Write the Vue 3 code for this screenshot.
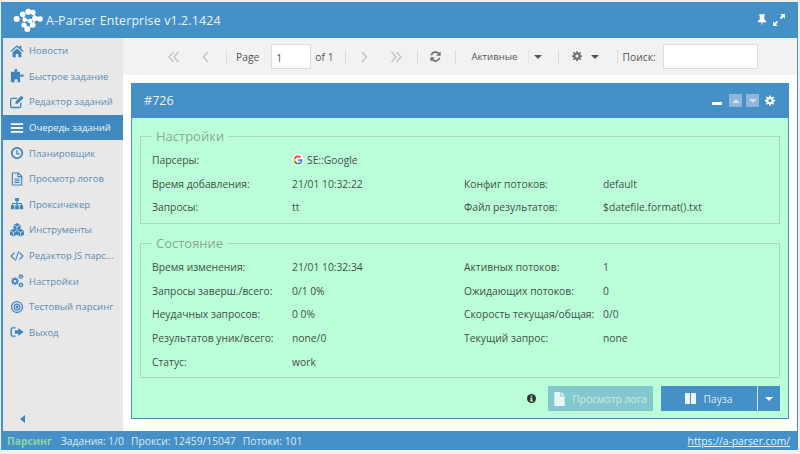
<script setup>
const menu = [
  { label: 'Новости', icon: 'home' },
  { label: 'Быстрое задание', icon: 'puzzle' },
  { label: 'Редактор заданий', icon: 'edit' },
  { label: 'Очередь заданий', icon: 'bars', active: true },
  { label: 'Планировщик', icon: 'clock' },
  { label: 'Просмотр логов', icon: 'file' },
  { label: 'Проксичекер', icon: 'sitemap' },
  { label: 'Инструменты', icon: 'cubes' },
  { label: 'Редактор JS парс...', icon: 'code' },
  { label: 'Настройки', icon: 'cogs' },
  { label: 'Тестовый парсинг', icon: 'target' },
  { label: 'Выход', icon: 'exit' }
]

const gearPath = 'M10.9 1h-1.8l-.4 2.2c-.5.1-1 .3-1.4.6L5.4 2.5 4.1 3.8l1.3 1.9c-.3.4-.5.9-.6 1.4L2.6 7.5v1.8l2.2.4c.1.5.3 1 .6 1.4l-1.3 1.9 1.3 1.3 1.9-1.3c.4.3.9.5 1.4.6l.4 2.2h1.8l.4-2.2c.5-.1 1-.3 1.4-.6l1.9 1.3 1.3-1.3-1.3-1.9c.3-.4.5-.9.6-1.4l2.2-.4V7.5l-2.2-.4c-.1-.5-.3-1-.6-1.4l1.3-1.9-1.3-1.3-1.9 1.3c-.4-.3-.9-.5-1.4-.6zM10 6a2.4 2.4 0 1 1 0 4.8A2.4 2.4 0 0 1 10 6z'
</script>

<template>
  <div class="page">
    <div class="window">
      <header class="titlebar">
        <svg class="logo" viewBox="0 0 36 30" width="36" height="30" fill="#fff">
          <circle cx="6.700" cy="14" r="3" />
          <circle cx="12.700" cy="9.300" r="2.800" />
          <circle cx="18.300" cy="6.700" r="3" />
          <circle cx="23" cy="7.300" r="2.600" />
          <circle cx="14.700" cy="14.700" r="2.300" />
          <circle cx="20" cy="16" r="2.300" />
          <circle cx="25" cy="13.300" r="2.800" />
          <circle cx="30" cy="14" r="2.800" />
          <circle cx="22.700" cy="20" r="2.800" />
          <circle cx="14" cy="20" r="2.600" />
          <circle cx="17.300" cy="24" r="3" />
          <path d="M12.700 9.300l2 5.400 5.300 1.300 5-2.700 5 .7M23 7.300L25 13.300 22.700 20l-5.400 4L14 20" stroke="#fff" stroke-width="1.500" fill="none" />
        </svg>
        <span class="app-title">A-Parser Enterprise v1.2.1424</span>
        <span class="title-icons">
          <svg viewBox="0 0 12 14" width="10" height="12" fill="#fff"><path d="M2.500 0h7v1.300L8.700 2v4.200L11 8.500v1.300H6.800L6 14l-.8-4.200H1V8.500l2.300-2.300V2l-.8-.7z" /></svg>
          <svg viewBox="0 0 14 14" width="12" height="12" fill="#fff"><path d="M8.500 0H14v5.500l-2-2L9.500 6 8 4.500 10.500 2zM5.500 14H0V8.500l2 2L4.500 8 6 9.500 3.500 12z" /></svg>
        </span>
      </header>

      <div class="middle">
        <aside class="sidebar">
          <nav class="menu">
            <a v-for="item in menu" :key="item.label" class="menu-item" :class="{ active: item.active }">
              <span class="menu-icon">
                <svg viewBox="0 0 16 16" width="14" height="14" fill="currentColor">
                  <path v-if="item.icon === 'home'" d="M8 1.500L.5 8l1 1.100L8 3.500l6.500 5.600 1-1.100-2.500-2.200V2h-2v2.100zM3 9.500V15h3.500v-3.500h3V15H13V9.500L8 5.200z" />
                  <path v-else-if="item.icon === 'puzzle'" d="M5 1.500a1.800 1.800 0 0 1 3.500 0c0 .8-.6 1.100-.6 1.700h3.600v3.600c.6 0 .9-.6 1.700-.6h2.300v2.600h-2.300c-.8 0-1.100-.6-1.700-.6V15H8.300c0-.6.6-.9.6-1.700a1.900 1.900 0 0 0-3.800 0c0 .8.6 1.100.6 1.700H1V3.200h4.600C5.600 2.600 5 2.300 5 1.500z" />
                  <g v-else-if="item.icon === 'edit'">
                    <path d="M2.500 3H9L7.500 4.500h-5a1 1 0 0 0-1 1v7a1 1 0 0 0 1 1h8a1 1 0 0 0 1-1V9.500L13 8v4.500a2.500 2.500 0 0 1-2.500 2.500h-8A2.500 2.500 0 0 1 0 12.500v-7A2.500 2.500 0 0 1 2.500 3z" />
                    <path d="M13 .800l2.500 2.500-6.700 6.700H6.300V7.500z" />
                  </g>
                  <path v-else-if="item.icon === 'bars'" d="M1 2.500h14v2.200H1zM1 6.900h14v2.200H1zM1 11.300h14v2.200H1z" />
                  <path v-else-if="item.icon === 'clock'" fill-rule="evenodd" d="M8 1a7 7 0 1 1 0 14A7 7 0 0 1 8 1zm0 2a5 5 0 1 0 0 10A5 5 0 0 0 8 3zM7.200 4.500h1.400v3.700h2.600v1.400h-4z" />
                  <path v-else-if="item.icon === 'file'" fill-rule="evenodd" d="M2 .500h8l4 4V15.500H2zM3.300 1.800v12.400h9.400V6H8.500V1.800zM9.800 2.200v2.500h2.500zM5 7.500h6v1H5zM5 9.500h6v1H5zM5 11.500h6v1H5z" />
                  <path v-else-if="item.icon === 'sitemap'" d="M5.800 1h4.400v3.500H8.700v2.300h5v2.700H15V14h-4V9.500h1.500V8H8.700v1.500H10V14H6V9.500h1.300V8h-3.800v1.500H5V14H1V9.500h1.300V6.800h5V4.500H5.800z" />
                  <g v-else-if="item.icon === 'cubes'" class="cubes">
                    <path d="M8 0l4 2.200v4.400L8 8.800 4 6.600V2.200z" />
                    <path d="M4 6.700l4 2.200v4.400l-4 2.200-4-2.200V8.900z" />
                    <path d="M12 6.700l4 2.200v4.400l-4 2.200-4-2.200V8.900z" />
                    <path class="cube-line" d="M4.500 2.400L8 4.300l3.500-1.900M8 4.300v4M.5 9.100L4 11l3.500-1.900M4 11v4M8.500 9.100L12 11l3.500-1.900M12 11v4" />
                  </g>
                  <path v-else-if="item.icon === 'code'" d="M4.700 3.500l.9 1-3.300 3.500 3.300 3.500-.9 1L.3 8zM11.300 3.500l4.400 4.500-4.400 4.500-.9-1L13.700 8l-3.300-3.500zM9.300 2.500l1.100.3-3.700 10.700-1.100-.3z" />
                  <g v-else-if="item.icon === 'cogs'">
                    <path transform="translate(-.5 3) scale(.62)" fill-rule="evenodd" :d="gearPath" />
                    <path transform="translate(8.500 -.5) scale(.4)" fill-rule="evenodd" :d="gearPath" />
                    <path transform="translate(8.500 9) scale(.4)" fill-rule="evenodd" :d="gearPath" />
                  </g>
                  <path v-else-if="item.icon === 'target'" fill-rule="evenodd" d="M8 1a7 7 0 1 1 0 14A7 7 0 0 1 8 1zm0 1.500a5.500 5.500 0 1 0 0 11 5.500 5.500 0 0 0 0-11zM8 4a4 4 0 1 1 0 8 4 4 0 0 1 0-8zm0 1.300a2.700 2.700 0 1 0 0 5.400 2.700 2.700 0 0 0 0-5.400zM8 6.300a1.700 1.700 0 1 1 0 3.400 1.700 1.700 0 0 1 0-3.400z" />
                  <path v-else-if="item.icon === 'exit'" d="M3 2.500h3.500V4H3.200a1 1 0 0 0-1 1v6a1 1 0 0 0 1 1h3.300v1.500H3A2.700 2.700 0 0 1 .500 11V5A2.700 2.700 0 0 1 3 2.500zM9.500 3.300L15.500 8l-6 4.700V10H5.500V6h4z" />
                </svg>
              </span>
              <span class="menu-label">{{ item.label }}</span>
            </a>
          </nav>
          <div class="collapse"></div>
        </aside>

        <main class="content">
          <div class="toolbar">
            <span class="tb-btn">
              <svg viewBox="0 0 12 12" width="12" height="12" class="chev"><path d="M5.500 1L1 6l4.500 5M10.500 1L6 6l4.500 5" /></svg>
            </span>
            <span class="tb-btn prev">
              <svg viewBox="0 0 12 12" width="12" height="12" class="chev"><path d="M8 1L3.500 6 8 11" /></svg>
            </span>
            <span class="sep"></span>
            <span class="tb-text page-word">Page</span>
            <span class="page-input">1</span>
            <span class="tb-text of-word">of 1</span>
            <span class="sep"></span>
            <span class="tb-btn next">
              <svg viewBox="0 0 12 12" width="12" height="12" class="chev"><path d="M4 1l4.500 5L4 11" /></svg>
            </span>
            <span class="tb-btn last">
              <svg viewBox="0 0 12 12" width="12" height="12" class="chev"><path d="M1.500 1L6 6l-4.500 5M6.500 1L11 6l-4.500 5" /></svg>
            </span>
            <span class="sep"></span>
            <span class="tb-btn refresh">
              <svg viewBox="0 0 16 16" width="13" height="13" fill="#6e6e6e"><path d="M8 1.500c1.800 0 3.400.7 4.500 1.900L14.300 1.700V7H9l2-2A4.300 4.300 0 0 0 3.900 6.500H1.800A6.400 6.400 0 0 1 8 1.500zM1.700 9H7l-2 2a4.300 4.300 0 0 0 7.100-1.500h2.100A6.400 6.400 0 0 1 3.500 12.600l-1.800 1.700z" /></svg>
            </span>
            <span class="sep"></span>
            <span class="tb-text small active-filter">Активные</span>
            <span class="sep faint"></span>
            <span class="caret-dark"></span>
            <span class="sep after-caret"></span>
            <svg class="gear" viewBox="0 0 20 18" width="14" height="13" fill="#6e6e6e"><path fill-rule="evenodd" :d="gearPath" /></svg>
            <span class="caret-dark gear-caret"></span>
            <span class="sep after-gear"></span>
            <span class="tb-text search-word">Поиск:</span>
            <span class="search-input"></span>
          </div>

          <section class="card">
            <div class="card-head">
              <span class="card-title">#726</span>
              <span class="card-tools">
                <span class="tool-min"></span>
                <span class="tool-box"><i class="tri up"></i></span>
                <span class="tool-box"><i class="tri down"></i></span>
                <svg viewBox="0 0 20 18" width="14" height="14" fill="#fff"><path fill-rule="evenodd" :d="gearPath" /></svg>
              </span>
            </div>
            <div class="card-body">
              <fieldset class="group first-group">
                <legend>Настройки</legend>
                <div class="rows">
                  <span>Парсеры:</span>
                  <span class="parser">
                    <svg viewBox="0 0 24 24" width="12" height="12">
                      <circle cx="12" cy="12" r="12" fill="#fff" />
                      <path fill="#4285F4" d="M21 12.200c0-.7-.1-1.300-.2-1.900H12v3.600h5a4.300 4.300 0 0 1-1.900 2.800v2.300h3C20 17.300 21 15 21 12.200z" />
                      <path fill="#34A853" d="M12 21c2.500 0 4.600-.8 6.100-2.200l-3-2.300c-.8.600-1.900.9-3.100.9-2.400 0-4.400-1.600-5.100-3.800H3.800v2.400A9 9 0 0 0 12 21z" />
                      <path fill="#FBBC05" d="M6.900 13.600a5.400 5.400 0 0 1 0-3.400V7.800H3.800a9 9 0 0 0 0 8.200z" />
                      <path fill="#EA4335" d="M12 6.600c1.300 0 2.500.5 3.500 1.400l2.600-2.600A9 9 0 0 0 3.800 7.800l3.100 2.400C7.600 8.100 9.600 6.600 12 6.600z" />
                    </svg>
                    SE::Google
                  </span>
                  <span></span><span></span>
                  <span>Время добавления:</span><span>21/01 10:32:22</span>
                  <span>Конфиг потоков:</span><span>default</span>
                  <span>Запросы:</span><span>tt</span>
                  <span>Файл результатов:</span><span>$datefile.format().txt</span>
                </div>
              </fieldset>

              <fieldset class="group second-group">
                <legend>Состояние</legend>
                <div class="rows">
                  <span>Время изменения:</span><span>21/01 10:32:34</span>
                  <span>Активных потоков:</span><span>1</span>
                  <span>Запросы заверш./всего:</span><span>0/1 0%</span>
                  <span>Ожидающих потоков:</span><span>0</span>
                  <span>Неудачных запросов:</span><span>0 0%</span>
                  <span>Скорость текущая/общая:</span><span>0/0</span>
                  <span>Результатов уник/всего:</span><span>none/0</span>
                  <span>Текущий запрос:</span><span>none</span>
                  <span>Статус:</span><span>work</span>
                </div>
              </fieldset>

              <div class="actions">
                <svg class="info" viewBox="0 0 16 16" width="9" height="9"><circle cx="8" cy="8" r="8" fill="#333" /><path fill="#baffd9" d="M6.500 2.500h3v2.500h-3zM5.500 6.500h4v5h1.200v2H5.500v-2h1v-3h-1z" /></svg>
                <button class="btn-log">
                  <svg viewBox="0 0 12 16" width="11" height="14" fill="#e8f6f5"><path d="M0 0h7v5h5v11H0zM8 0l4 4H8z" /></svg>
                  Просмотр лога
                </button>
                <div class="pause-group">
                  <button class="btn-pause">
                    <span class="pause-icon"><i></i><i></i></span>
                    Пауза
                  </button>
                  <button class="btn-drop"><i class="tri down"></i></button>
                </div>
              </div>
            </div>
          </section>
        </main>
      </div>

      <footer class="statusbar">
        <span class="st-state">Парсинг</span>
        <span>Задания: 1/0</span>
        <span>Прокси: 12459/15047</span>
        <span>Потоки: 101</span>
        <a class="st-link">https://a-parser.com/</a>
      </footer>
    </div>
  </div>
</template>

<style>
html, body { margin: 0; background: #fff; }
</style>

<style scoped>
.page {
  width: 800px;
  height: 454px;
  padding: 2px 2px 4px 1px;
  box-sizing: border-box;
  background: #eef1f3;
  font-family: "Open Sans", "Noto Sans", sans-serif;
  font-size: 10.3px;
  color: #444;
  overflow: hidden;
}
.window {
  height: 100%;
  box-sizing: border-box;
  display: flex;
  flex-direction: column;
  background: #fff;
  border-left: 2px solid #4590c6;
  border-right: 1px solid #4590c6;
}
.titlebar {
  height: 36px;
  flex: none;
  background: #4590c6;
  display: flex;
  align-items: center;
  padding: 0 12px 0 7px;
  color: #fff;
}
.app-title { font-size: 12.4px; letter-spacing: .15px; color: #eef5fa; }
.title-icons { margin-left: auto; display: flex; gap: 6px; align-items: center; }

.middle { flex: 1; display: flex; min-height: 0; }
.sidebar {
  width: 120px;
  flex: none;
  background: #e8e8e8;
  display: flex;
  flex-direction: column;
}
.menu { display: flex; flex-direction: column; }
.menu-item {
  height: 25.6px;
  display: flex;
  align-items: center;
  padding-left: 7px;
  color: #5a8db5;
  white-space: nowrap;
  font-size: 9.5px;
}
.menu-item.active { background: #3f89c0; color: #f1f7fb; }
.menu-icon { width: 14px; margin-right: 5px; display: flex; color: #3f85bb; }
.active .menu-icon { color: #fff; }
.cube-line { fill: none; stroke: #e8e8e8; stroke-width: .8; }
.collapse {
  margin: auto 0 8px 17px;
  width: 0;
  height: 0;
  border-top: 4px solid transparent;
  border-bottom: 4px solid transparent;
  border-right: 5px solid #3f85bb;
}

.content { flex: 1; min-width: 0; display: flex; flex-direction: column; }
.toolbar {
  height: 37px;
  flex: none;
  background: #f2f2f2;
  display: flex;
  align-items: center;
  padding-left: 39px;
  box-sizing: border-box;
  color: #555;
}
.tb-btn { display: flex; justify-content: center; align-items: center; width: 24px; flex: none; }
.chev { fill: none; stroke: #c2c2c2; stroke-width: 1.300; }
.prev { margin: 0 3px 0 8px; }
.next { margin-left: 1px; }
.last { margin: 0 4px 0 8px; }
.refresh { margin: 0 2px 0 1px; }
.sep { width: 1px; height: 14px; background: #dcdcdc; margin: 0 5px; flex: none; }
.sep.faint { background: #e8e8e8; }
.tb-text { white-space: nowrap; }
.page-word { margin: 0 12px 0 4px; }
.page-input {
  width: 40px;
  height: 25px;
  flex: none;
  box-sizing: border-box;
  border: 1px solid #ddd;
  background: #fff;
  padding: 6px 0 0 4px;
  margin-right: 4px;
}
.of-word { margin-right: 6px; }
.small { font-size: 9.6px; }
.active-filter { margin: 0 5px 0 11px; }
.caret-dark {
  width: 0;
  height: 0;
  flex: none;
  border-left: 4px solid transparent;
  border-right: 4px solid transparent;
  border-top: 4px solid #555;
}
.after-caret { margin-left: 16px; }
.gear { margin-left: 6px; flex: none; }
.gear-caret { margin-left: 7px; }
.after-gear { margin-left: 18px; }
.search-word { margin-right: 7px; }
.search-input {
  width: 95px;
  height: 25px;
  flex: none;
  box-sizing: border-box;
  border: 1px solid #ddd;
  background: #fff;
}

.card {
  margin: 8px 8px 0 8px;
  height: 336px;
  display: flex;
  flex-direction: column;
  box-sizing: border-box;
  border: 1px solid #4590c6;
  border-top: 0;
  background: #baffd9;
}
.card-head {
  height: 35px;
  flex: none;
  margin: 0 -1px;
  background: #4590c6;
  color: #fff;
  display: flex;
  align-items: center;
  justify-content: space-between;
  padding: 0 12px 0 13px;
}
.card-title { font-size: 12.6px; color: #eaf3f9; }
.card-tools { display: flex; align-items: center; gap: 4px; }
.tool-min { width: 10px; height: 3px; background: #fff; margin: 5px 3px 0 0; }
.tool-box {
  width: 13px;
  height: 13px;
  background: #8fb6d6;
  display: flex;
  align-items: center;
  justify-content: center;
}
.tri { width: 0; height: 0; display: block; border-left: 4px solid transparent; border-right: 4px solid transparent; }
.tri.up { border-bottom: 4px solid #cfe0ee; }
.tri.down { border-top: 4px solid #cfe0ee; }
.card-body { flex: 1; padding: 10px 8px 0 8px; display: flex; flex-direction: column; }
.group {
  margin: 0;
  padding: 0 11px;
  border: 1px solid #a9d9bd;
  min-width: 0;
}
.group legend {
  font-size: 13px;
  color: #8aa797;
  padding: 0 4px;
  line-height: 17px;
}
.first-group { height: 96px; box-sizing: border-box; }
.second-group { height: 143px; box-sizing: border-box; margin-top: 11px; }
.rows {
  display: grid;
  grid-template-columns: 140px 172px 139px 1fr;
  grid-auto-rows: 23.8px;
  align-items: center;
  margin-top: 3px;
  color: #3f4f47;
}
.parser { display: flex; align-items: center; gap: 3px; }
.actions {
  display: flex;
  align-items: center;
  justify-content: flex-end;
  margin-top: 8px;
  gap: 8px;
}
.info { margin-right: 4px; }
button {
  border: 0;
  font-family: inherit;
  font-size: 10.3px;
  height: 25px;
  display: flex;
  align-items: center;
  padding: 0;
}
.btn-log {
  width: 105px;
  background: #83c8cc;
  color: #cdebe9;
  justify-content: center;
  gap: 7px;
}
.pause-group { display: flex; }
.btn-pause {
  width: 96px;
  background: #4590c6;
  color: #dcebf5;
  justify-content: center;
  gap: 7px;
  border-right: 1px solid #cfe2f0;
  box-sizing: content-box;
}
.pause-icon { display: flex; gap: 1px; }
.pause-icon i { width: 5px; height: 11px; background: #eef5fa; display: block; }
.btn-drop { width: 22px; background: #4590c6; justify-content: center; }
.btn-drop .tri.down { border-top-color: #fff; }

.statusbar {
  height: 19px;
  flex: none;
  background: #4590c6;
  color: #dcebf5;
  display: flex;
  align-items: center;
  padding-left: 4px;
  gap: 7px;
}
.st-state { color: #8fd6a0; font-weight: 700; margin-right: 2px; }
.st-link { margin-left: auto; margin-right: 7px; text-decoration: underline; color: #eaf3f9; }
</style>
